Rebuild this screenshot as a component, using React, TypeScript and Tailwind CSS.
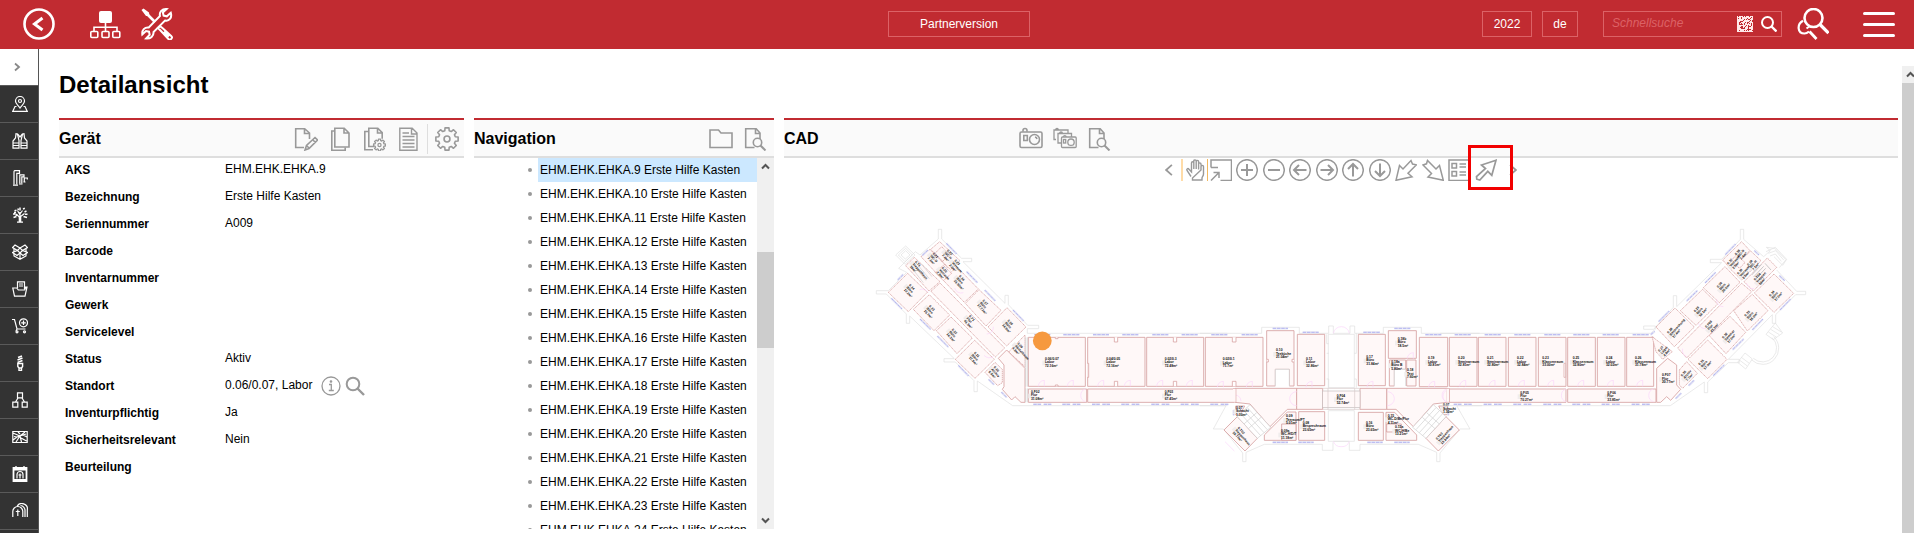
import type { ReactNode } from 'react';

type IconProps = { children: ReactNode; className?: string; box?: number; sw?: number };

function Icon({ children, className = 'size-6', box = 24, sw = 1.6 }: IconProps) {
  return (
    <svg viewBox={`0 0 ${box} ${box}`} className={className} fill="none" stroke="currentColor" strokeWidth={sw} aria-hidden="true">
      {children}
    </svg>
  );
}

/* ---------- sidebar ---------- */

const sideItems: { label: string; icon: ReactNode }[] = [
  {
    label: 'Standorte',
    icon: (
      <>
        <path d="M8 12C5 8.500 3.500 7 3.500 5a4.500 4.500 0 0 1 9 0C12.500 7 11 8.500 8 12z" />
        <circle cx="8" cy="5" r="1.500" />
        <path d="M4.500 10.500H3L.8 15.300h14.400L13 10.500h-1.500" />
      </>
    ),
  },
  {
    label: 'Arbeitsschutz',
    icon: (
      <>
        <path d="M4 .8 3.500 5 1 8v7.200h6V7.500L5.500 1zM12 .8l.5 4.200L15 8v7.200H9V7.500L10.500 1z" />
        <path d="M1 10h6M1 12.500h6M9 10h6M9 12.500h6M5.500 1 8 4l2.500-3" />
      </>
    ),
  },
  {
    label: 'Leitungen',
    icon: (
      <>
        <path d="M2 14.500V1.500A1 1 0 0 1 3 .7h4.500v2.600H4.800v11.200" />
        <path d="M7.800 13.500V4.800H12v2H9.800v6.700M12.300 12V8h3v1.600" />
        <path d="M1 15.200h5M7 14h3.500M11.500 12h2" />
      </>
    ),
  },
  {
    label: 'Grünflächen',
    icon: (
      <>
        <path d="M8 15V5M8 10.500 4 7M8 10l4.500-3.500M8 8 5.500 3.500M8 7l2.500-3.500M5 15.200h6" />
        <path d="M7.500 10v5M8.500 10v5" strokeWidth="1.600" />
        <path d="M1 7h2.500M1.500 10.500 4.500 9.500M4.500 3.200 2.500 3.800M8 .5V3.500M11 2l1.800-.8M12.500 5l2-1M11.500 9.500l3.500 1M4 5.500H2M5.800 1.500l.7 1.500M13 7.200h2.500M5.500 8l-2 .5" strokeWidth="1.500" />
      </>
    ),
  },
  {
    label: 'Lager',
    icon: (
      <>
        <path d="m8 4 5-3 2.500 2.500L10.500 6.500 8 4 5.500 6.500.5 3.500 3 1z" />
        <path d="M5.500 6.500 8 9l2.500-2.500 5 2-4.500 3L8 9l-3 2.500-4.500-3z" />
        <path d="M2 9.500V12l6 3.300 6-3.300V9.500M8 9v6M2 5v3M14 5v3" />
      </>
    ),
  },
  {
    label: 'Dokumente',
    icon: (
      <>
        <path d="M5.500 7V.8h7V8M7 3h4M7 5h4" />
        <path d="M12.500 6H15l-2 9.200H2.500L.8 7h4l1.500 2h6.200L14 6" />
      </>
    ),
  },
  {
    label: 'Bestellung',
    icon: (
      <>
        <path d="M0 1.500h2.500L5 11h8.500M4 13l1-2" />
        <circle cx="11.500" cy="4.800" r="4" />
        <path d="M11.500 2.500v4.600M9.200 4.800h4.600" />
        <circle cx="5" cy="13.800" r="1" />
        <circle cx="12.500" cy="13.800" r="1" />
      </>
    ),
  },
  {
    label: 'Energie',
    icon: (
      <>
        <path d="M6 2.500 10 1M5.500 5 10.500 3M5.500 7.500l5-2" strokeWidth="1.500" />
        <path d="M5.800 8.500h4.800v3l-1 1.500H7l-1.200-1.500zM7 13.500v2h2.500v-2" strokeWidth="1.400" />
      </>
    ),
  },
  {
    label: 'Struktur',
    icon: <path d="M5.500.8h5v5h-5zM.8 10.200h5v5h-5zM10.200 10.200h5v5h-5zM6 6l-2.500 4M10 6l2.500 4" />,
  },
  {
    label: 'Karte',
    icon: <path d="M.8 2.500h14.400v11H.8zM1 4l7 3 5-4M1 11l4-3 9-3M4 13l4-6 1.500 6M9 9l5.500 3M6 3l2 2M2 7.500l3 .5M11 6l4 2" />,
  },
  {
    label: 'Termine',
    icon: (
      <>
        <path d="M1.500 2h13v13h-13z" strokeWidth="1.800" />
        <path d="M1.500 3.500h13M4 .3V3M12 .3V3M1 14h14" strokeWidth="1.800" />
        <path d="M5 12.500V8.500a3 3 0 0 1 6 0v4M8 7.500v5M6.500 9h3" />
      </>
    ),
  },
  {
    label: 'Friedhof',
    icon: (
      <>
        <path d="M.8 14V8.500a5 5 0 0 1 10 0V14" />
        <path d="M5 3.500a5.500 5.500 0 0 1 10.300 3.500v7M8.500 2.500A5 5 0 0 1 13 8v6M5.800 6.500V13M3.800 8.500h4" />
      </>
    ),
  },
];

function Sidebar() {
  return (
    <nav aria-label="Module" className="flex w-[39px] shrink-0 flex-col overflow-hidden border-r border-[#555] bg-[#333] text-white">
      <button aria-label="Menü ausklappen" className="flex h-9 shrink-0 items-center bg-white pl-3 text-[#888]">
        <Icon box={10} className="size-2.5" sw={1.8}>
          <path d="m3 1.500 4 3.500-4 3.500" />
        </Icon>
      </button>
      {sideItems.map((it) => (
        <a key={it.label} href="#" aria-label={it.label} className="flex h-[37px] shrink-0 items-center border-t border-[#5a5a5a] pl-3">
          <Icon box={16} className="size-4" sw={1.2}>
            {it.icon}
          </Icon>
        </a>
      ))}
      <div className="flex-1 border-t border-[#5a5a5a]" />
    </nav>
  );
}

/* ---------- header ---------- */

const codeCells = Array.from({ length: 256 }, (_, i) => i).filter((i) => {
  const x = i % 16;
  const y = (i - x) / 16;
  const h = Math.abs(Math.sin(x * 12.9898 + y * 78.233) * 43758.5453) % 1;
  return x === 0 || y === 15 || h < 0.62;
});

function Header() {
  return (
    <header className="grid h-[49px] shrink-0 grid-cols-[1fr_auto_1fr] items-center bg-[#c12b31] pb-px text-xs text-white">
      <div className="flex items-center pl-[23px]">
        <button aria-label="Zurück">
          <Icon box={32} className="size-8" sw={2.6}>
            <circle cx="16" cy="16" r="14.500" />
            <path d="m19.500 10-8 6 8 6" strokeWidth="3" />
          </Icon>
        </button>
        <button aria-label="Struktur" className="ml-[34px]">
          <Icon box={32} className="size-8" sw={1.6}>
            <rect x="10" y="3" width="13" height="12" rx="2" fill="currentColor" stroke="none" />
            <path d="M16.500 15v8M5 23v-3.800h23V23" />
            <rect x="1.800" y="23.500" width="7" height="6" rx="1" />
            <rect x="13" y="23.500" width="7" height="6" rx="1" />
            <rect x="23.800" y="23.500" width="7" height="6" rx="1" />
          </Icon>
        </button>
        <button aria-label="Werkzeuge" className="ml-5">
          <Icon box={32} className="size-8" sw={2}>
            <path d="M4.500 4.500 14 14" strokeWidth="2.600" />
            <path d="M.5 2 2.500.5 8 4.500 8.500 8 5 8z" fill="currentColor" stroke="none" />
            <path d="m17 20 2-2 3 2.500 8.200 7.500a2 2 0 0 1-2.800 3L20 23zM23 23.500l5 5" />
            <path d="m29.800 4.800-4 3.500-3.200-.7-.8-3.200 3.700-3.300C21 .8 18 4 19 8L7.800 19.500C3.500 19 .8 22 1.300 26.500L5 23l3 .7.700 3-3.600 3.800C9.500 31 13 28 12.500 24L24 12.500c4 1 7.300-2.500 5.800-7.700z" />
          </Icon>
        </button>
      </div>
      <button className="ml-1 h-[26px] w-[142px] border border-[#dc6266]">Partnerversion</button>
      <div className="flex items-center justify-end pr-[19px]">
        <button className="h-[26px] w-[50px] border border-[#dc6266]">2022</button>
        <button className="ml-2.5 h-[26px] w-9 border border-[#dc6266]">de</button>
        <form className="ml-[25px] flex h-[26px] w-[179px] items-center border border-[#dc6266] pr-1">
          <input
            aria-label="Schnellsuche"
            placeholder="Schnellsuche"
            className="min-w-0 flex-1 bg-transparent pb-0.5 pl-2 italic outline-none placeholder:text-[#dc6266]"
          />
          <button type="button" aria-label="Code scannen">
            <svg viewBox="0 0 16 16" className="size-4" fill="#ffe9e9" shapeRendering="crispEdges">
              {codeCells.map((i) => (
                <rect key={i} x={i % 16} y={Math.floor(i / 16)} width="1" height="1" />
              ))}
            </svg>
          </button>
          <button aria-label="Suchen" className="ml-2">
            <Icon box={16} className="size-4" sw={2}>
              <circle cx="6.500" cy="6.500" r="5.500" />
              <path d="m10.500 10.500 5 5" strokeWidth="2.400" />
            </Icon>
          </button>
        </form>
        <button aria-label="Erweiterte Suche" className="ml-[15px]">
          <Icon box={32} className="size-8" sw={2.6}>
            <circle cx="16.500" cy="10" r="9" />
            <path d="m23 16.500 8.500 8.500" strokeWidth="3.200" />
            <path d="M6 12.800C-.5 16.500.5 25.500 7.500 25.500c2 0 3-.7 4.500-2" strokeWidth="2.200" />
            <path d="m12.500 23.500 7 7.500" strokeWidth="2.800" />
            <path d="M9.500 20.500 13 18" strokeWidth="2" />
          </Icon>
        </button>
        <button aria-label="Menü" className="ml-[34px] flex w-8 flex-col gap-2">
          <span className="h-[3px] w-full rounded-sm bg-white" />
          <span className="h-[3px] w-full rounded-sm bg-white" />
          <span className="h-[3px] w-full rounded-sm bg-white" />
        </button>
      </div>
    </header>
  );
}

/* ---------- panels ---------- */

function Gear({ cx, cy, r }: { cx: number; cy: number; r: number }) {
  const pts: string[] = [];
  for (let i = 0; i < 8; i++) {
    [[-15, 0.76], [-10, 1], [10, 1], [15, 0.76]].forEach(([o, k]) => {
      const a = ((i * 45 + o) * Math.PI) / 180;
      pts.push(`${(cx + Math.cos(a) * r * k).toFixed(2)},${(cy + Math.sin(a) * r * k).toFixed(2)}`);
    });
  }
  return (
    <>
      <polygon points={pts.join(' ')} strokeLinejoin="round" />
      <circle cx={cx} cy={cy} r={r * 0.26} />
    </>
  );
}

const docSearch = (
  <>
    <path d="M11.500 20.500H2.700V1.700h10.500L17 6v6M12.500 2v4.500H17" />
    <circle cx="14.500" cy="15.500" r="4.200" />
    <path d="m17.500 18.500 5 5" strokeWidth="2" />
  </>
);

function PanelHead({ title, children }: { title: string; children: ReactNode }) {
  return (
    <div className="flex h-10 shrink-0 items-center border-t-2 border-b-2 border-t-[#c12b31] border-b-[#dedede] bg-[#fafafa] pt-0.5">
      <h2 className="min-w-[235px] flex-none text-base font-bold">{title}</h2>
      <div className="flex flex-1 items-center text-[#999]">{children}</div>
    </div>
  );
}

function Tool({ label, children }: { label: string; children: ReactNode }) {
  return (
    <button aria-label={label} className="shrink-0">
      <Icon>{children}</Icon>
    </button>
  );
}

const fields: [string, string][] = [
  ['AKS', 'EHM.EHK.EHKA.9'],
  ['Bezeichnung', 'Erste Hilfe Kasten'],
  ['Seriennummer', 'A009'],
  ['Barcode', ''],
  ['Inventarnummer', ''],
  ['Gewerk', ''],
  ['Servicelevel', ''],
  ['Status', 'Aktiv'],
  ['Standort', '0.06/0.07, Labor'],
  ['Inventurpflichtig', 'Ja'],
  ['Sicherheitsrelevant', 'Nein'],
  ['Beurteilung', ''],
];

function DevicePanel() {
  return (
    <section className="w-[405px] shrink-0">
      <PanelHead title="Gerät">
        <div className="flex gap-2.5">
          <Tool label="Bearbeiten">
            <path d="M10 20.500H1.700V1.700h9L15.500 6v6M10.500 2v4.500h5" />
            <path d="m11 23 1.500-4.500 8.500-8 2.500 2.500-8.500 8.500zM18.500 12.500l3 3M12.500 18.500l3 3" />
          </Tool>
          <Tool label="Kopieren">
            <path d="M6.800 1.200h9.400L21 6v14H6.800zM16 1.500V6h5" />
            <path d="M6.500 4H3.800v19.200h13.400V20.500" />
          </Tool>
          <Tool label="Kopieren mit Optionen">
            <path d="M12 19.500H6.800V1.200h9L20.200 5.700v6M15.500 1.500V6h4.700" />
            <path d="M6.500 4.500H2.800v18.200H11" />
            <g strokeWidth="1.300">
              <Gear cx={17.500} cy={18} r={6} />
            </g>
          </Tool>
          <Tool label="Bericht">
            <path d="M3.800 1.200h12.400L21 6v17.200H3.800zM15.500 1.500V7H21M6.500 6H13M6.500 9.500h12M6.500 13h12M6.500 16.500h12M6.500 20h12" strokeWidth="1.400" />
          </Tool>
        </div>
        <div className="ml-auto flex h-[30px] items-center border-l border-[#dedede] pr-[5px] pl-[7px]">
          <Tool label="Einstellungen">
            <Gear cx={12} cy={12} r={11.3} />
          </Tool>
        </div>
      </PanelHead>
      <dl className="flex flex-col gap-1 pl-1.5 text-xs leading-[23px]">
        {fields.map(([k, v]) => (
          <div key={k} className="flex h-[23px]">
            <dt className="w-40 shrink-0 pt-px font-bold">{k}</dt>
            <dd className="flex items-center">
              {v}
              {k === 'Standort' && (
                <span className="ml-[9px] flex items-center gap-1 text-[#999]">
                  <button aria-label="Information">
                    <Icon box={20} className="size-5" sw={1.3}>
                      <circle cx="10" cy="10" r="9" />
                      <path d="M8 8.500h2.300v6M7.800 14.500h5" />
                      <circle cx="10" cy="5.500" r=".7" fill="currentColor" />
                    </Icon>
                  </button>
                  <button aria-label="Standort suchen">
                    <Icon box={20} className="size-5" sw={2}>
                      <circle cx="8" cy="8" r="6.300" />
                      <path d="m12.500 12.500 6.500 6.500" strokeWidth="2.400" />
                    </Icon>
                  </button>
                </span>
              )}
            </dd>
          </div>
        ))}
      </dl>
    </section>
  );
}

const devices = Array.from({ length: 16 }, (_, i) => `EHM.EHK.EHKA.${i + 9} Erste Hilfe Kasten`);

function ScrollArrow({ up = false }: { up?: boolean }) {
  return (
    <span className="flex h-[17px] shrink-0 items-center justify-center text-[#555]">
      <Icon box={9} className="size-[9px]" sw={2}>
        <path d={up ? 'M1 6.500 4.500 3 8 6.500' : 'M1 2.500 4.500 6 8 2.500'} />
      </Icon>
    </span>
  );
}

function NavigationPanel() {
  return (
    <section className="flex w-[300px] shrink-0 flex-col">
      <PanelHead title="Navigation">
        <div className="flex gap-2.5">
          <Tool label="Ordner">
            <path d="M1 3h8.500l2.500 3h11v14.500H1z" />
          </Tool>
          <Tool label="Vorschau">{docSearch}</Tool>
        </div>
      </PanelHead>
      <div className="flex min-h-0 flex-1">
        <ul className="min-w-0 flex-1 overflow-hidden pl-[54px] text-xs leading-6">
          {devices.map((d, i) => (
            <li key={d} className="flex items-center">
              <span className="mr-1.5 size-1 shrink-0 rounded-full bg-[#999]" />
              <a href="#" className={`flex-1 whitespace-nowrap pl-0.5 ${i === 0 ? 'bg-[#cce8ff]' : ''}`}>
                {d}
              </a>
            </li>
          ))}
        </ul>
        <div className="flex w-[17px] shrink-0 flex-col bg-[#f0f0f0]">
          <ScrollArrow up />
          <div className="flex flex-1 flex-col pt-[77px]">
            <div className="h-24 bg-[#cdcdcd]" />
          </div>
          <ScrollArrow />
        </div>
      </div>
    </section>
  );
}

/* ---------- floor plan ---------- */

const roomCls = { fill: '#fff8f8', stroke: '#d8a2a2', strokeWidth: 2.6 };

function Rooms({ list, dashed = false }: { list: string[]; dashed?: boolean }) {
  return (
    <g {...roomCls} strokeDasharray={dashed ? '4 2' : undefined}>
      {list.map((p) => (
        <polygon key={p} points={p} />
      ))}
    </g>
  );
}

function Windows({ list }: { list: string[] }) {
  return (
    <g fill="none">
      <path d={list.join('')} stroke="#e6e6f4" strokeWidth="7" />
      <path d={list.join('')} stroke="#9a9df2" strokeWidth="2" strokeDasharray="10 3" />
    </g>
  );
}

type LabelDef = [number, number, string, string, string];

function Labels({ list, rotate = 0 }: { list: LabelDef[]; rotate?: number }) {
  return (
    <g fill="#111" fontSize="10" fontWeight="700" fontFamily="'Liberation Sans', Arial, sans-serif">
      {list.map(([x, y, a, b, c]) => (
        <g key={`${x}-${y}`} transform={`translate(${x} ${y}) rotate(${rotate})`}>
          <rect x="-8" y="-4" width="22" height="14" fill="#f1eded" />
          <text x="0" y="-6">{a}</text>
          <text x="0" y="4">{b}</text>
          <text x="0" y="15">{c}</text>
        </g>
      ))}
    </g>
  );
}

const box = (x1: number, y1: number, x2: number, y2: number) => `${x1},${y1} ${x2},${y1} ${x2},${y2} ${x1},${y2}`;
const door = (x: number, y: number) => `M${x} ${y}v-18a18 18 0 0 0-18 18`;
const facade = (xs: number[], top: number, bottom: number) =>
  xs.flatMap((x) => [`M${x - 24} ${top}h48`, `M${x - 27} ${bottom}h24`, `M${x + 4} ${bottom}h23`]);

function LeftWing() {
  return (
    <g transform="translate(860 220) scale(.33333)">
      <g fill="none" stroke="#e0e0e0" strokeWidth="2">
        <path d="M235 57V28h10v29l60 58h30v10h-26L435 250v-24h10v28l58 62h33v10h-34v14h600M85 212H49v10h30l60 60v28h10v-22L283 416h-31v10h34l56 56v33h10v-32l106 74h644M85 212l55-55-24-12 50-50 14 10 55-48" />
        <path d="m107 105 30-27 28 27-30 28zM115 105l22-20 20 20-22 20zM123 105l14-13 13 13-14 12z" />
      </g>
      <Rooms
        dashed
        list={[
          '85,217 143,160 202,217 145,275',
          '160,268 208,224 269,285 222,332',
          '229,332 273,291 337,354 291,401',
          '286,418 344,361 403,418 345,475',
          '213,214 240,189 434,384 406,411',
          '249,180 290,140 355,207 313,247',
          '316,250 357,209 423,271 378,318',
          '384,321 441,263 498,321 440,378',
          '183,110 210,88 262,142 237,168',
          '212,88 239,65 300,122 272,150',
          '225,100 245,80 268,104 248,124',
          '226,158 250,136 275,160 250,182',
          '137,137 163,112 240,185 207,213',
          '446,396 495,345 495,440',
          '375,457 405,427 427,448 427,488 413,497',
        ]}
      />
      <Rooms
        list={[
          '415,415 440,390 495,445 495,547 483,547 465,530 455,540 427,508 432,500 432,435',
          box(505, 352, 676, 499),
          box(683, 352, 855, 499),
          box(860, 352, 1031, 499),
          box(505, 507, 680, 547),
          '683,507 1121,507 1121,547 683,547',
        ]}
      />
      <g fill="none" stroke="#cfcfcf" strokeWidth="2">
        <path d="m160 150 30 38m-22-44 30 38m-22-44 32 38m-24-44 32 38" />
        <path d="M497 352v148M502 352v148M497 505v42M502 505v42" />
      </g>
      <g fill="#fff" stroke="#d8a2a2" strokeWidth="2.400">
        <path d="M763 352v14h10v-14M763 499v-15h10v15M940 352v14h10v-14M940 499v-15h10v15M586 352v4h8v-4M586 499v-4h8v4M682 430h4v42h-4" />
      </g>
      <path
        d={[553, 640, 731, 811, 908, 997].map((x) => door(x, 499)).join('') + 'M676 507a20 20 0 0 0 0 38M205 217a22 22 0 0 0-26-8M310 218a20 20 0 0 1-26-14M400 320a20 20 0 0 1-20 22M400 410a22 22 0 0 1-28-4'}
        fill="none"
        stroke="#fbd5fb"
        strokeWidth="2"
      />
      <Windows
        list={[
          ...facade([547, 634, 723, 811, 901, 989, 1078], 344, 553),
          'M259 70l31 32', 'M320 155l32 33', 'M374 210l32 33', 'M459 270l32 33', 'M94 235l32 32', 'M180 297l32 31',
          'M232 348l33 33', 'M295 436l31 32', 'M386 478l16 16', 'M424 516l16 16', 'M187 106l17-16', 'M113 180l17-17',
        ]}
      />
      <Labels
        rotate={48}
        list={[
          [142, 200, '0.14', 'Büro', '17.2m²'], [202, 263, '0.13', 'Büro', '15.7m²'], [270, 333, '0.12', 'Büro', '16.1m²'], [337, 403, '0.11', 'Büro', '17.5m²'],
          [322, 293, '0.F1', 'Flur', '41.3m²'], [292, 173, '0.16', 'Büro', '21.90m²'], [362, 246, '0.17', 'Büro', '17.77m²'], [437, 306, '0.18', 'Büro', '16.9m²'],
          [213, 105, '0.21', 'WC-D', '7.1m²'], [256, 96, '0.22', 'WC-H', '7.4m²'], [240, 148, '0.20', 'Vorraum', '2.8m²'], [278, 126, '0.23', 'Vorraum', '2.6m²'],
          [160, 130, '0.T1', 'Treppenhaus', '19m²'], [467, 375, '0.09', 'Abstellraum', '4.8m²'], [396, 446, '0.10', 'Archiv', '8.5m²'],
        ]}
      />
      <Labels
        list={[
          [555, 426, '0.06/0.07', 'Labor', '72.16m²'], [739, 426, '0.04/0.05', 'Labor', '72.16m²'], [914, 426, '0.02/0.3', 'Labor', '72.48m²'],
          [513, 525, '0.F02', 'Flur', '31.08m²'], [914, 525, '0.F03', 'Flur', '67.45m²'],
        ]}
      />
    </g>
  );
}

function CentreBlock() {
  return (
    <g transform="translate(1200 300) scale(.33333)">
      <g fill="none" stroke="#e0e0e0" strokeWidth="2">
        <path d="M0 100h185V82h113v18h88V78h14v22h50V78h14v22h86V82h114v18h175M385 103h78v160h-78zM380 103v28h6M380 160h6M463 160h6v-60M380 237h6v26M463 237h6v26" />
        <path d="M0 317h78l-38 70v0h30l58 72v26h10v-28l55-24h174v18h32v-24M385 332h78v92h-78zM846 317h-76l40 70h-30l-60 72v26h-10v-28l-55-24H480v18h-32v-24M400 424h48" />
      </g>
      <Rooms
        list={[
          box(16, 112, 189, 259),
          '200,92 282,92 282,258 268,258 268,208 226,208 226,258 200,258',
          box(292, 103, 374, 257),
          box(475, 103, 556, 257),
          box(565, 92, 649, 175),
          '568,180 617,180 617,208 583,208 583,258 568,258',
          box(620, 180, 648, 258),
          box(658, 112, 743, 260),
          '105,265 290,265 290,328 262,328 210,380 150,312 105,307',
          '741,265 560,265 560,328 588,328 640,380 700,312 741,307',
          box(290, 265, 368, 328),
          box(480, 265, 560, 328),
          box(296, 335, 374, 421),
          box(475, 337, 550, 421),
          '193,405 262,336 288,336 288,421 193,421',
          '558,337 584,337 650,405 650,421 558,421',
          '245,372 288,372 288,421 245,421',
          box(560, 372, 604, 396),
          '72,390 112,350 172,415 135,453',
          '778,390 738,350 678,415 715,453',
          '107,318 134,318 120,344 107,344',
          '743,318 716,318 730,344 743,344',
        ]}
      />
      <rect x="368" y="273" width="112" height="49" fill="#fff8f8" stroke="#c4bcbc" strokeWidth="2" />
      <path d="M368 265h112M368 328h112M384 265v64M464 265v64" stroke="#d8c8c8" strokeWidth="2" />
      <g fill="#fff" stroke="#cfcfcf" strokeWidth="2">
        <path d="m112 350 38-36 62 68-40 33zM738 350l-38-36-62 68 40 33z" />
        <path d="m122 341 60 66M132 332l60 66M142 323l60 66M728 341l-60 66M718 332l-60 66M708 323l-60 66M132 372l38-34M718 372l-38-34M145 386l38-34M705 386l-38-34" />
        <path d="M226 258v-50h42v50M583 258v-50h34v50" />
      </g>
      <g fill="#fff" stroke="#d8a2a2" strokeWidth="2.400">
        <path d="M97 112v14h11v-14M97 259v-15h11v15M200 178h5v8h-5M282 178h-6v8h6" />
      </g>
      <path
        d={[70, 157, 336, 519, 704, 792, 640].map((x, i) => door(x, i === 6 ? 176 : 262)).join('') + 'M400 100a24 24 0 0 1 24-20 24 24 0 0 1 24 20M105 285a20 20 0 0 1 18 18M290 275a20 20 0 0 0 0 42M562 275a20 20 0 0 1 0 42M740 270a22 22 0 0 0 0 38M75 425l28 28M400 424a24 24 0 0 0 24 16 24 24 0 0 0 24-16'}
        fill="none"
        stroke="#fbd5fb"
        strokeWidth="2"
      />
      <Windows
        list={[
          'M125 104h48', 'M218 85h46', 'M308 97h48', 'M490 97h50', 'M583 85h48', 'M676 104h48',
          'M218 427h46', 'M295 427h46', 'M502 427h46', 'M583 427h46', 'M101 330v16', 'M745 330v16',
        ]}
      />
      <Labels
        list={[
          [68, 187, '0.02/0.1', 'Labor', '71.7m²'], [228, 160, '0.10', 'Teeküche', '21.04m²'], [318, 186, '0.11', 'Labor', '32.86m²'], [499, 180, '0.17', 'Büro', '31.84m²'],
          [593, 126, '0.18b', 'Büro', '18.5m²'], [574, 194, '0.18a', 'Büro B', '5.80m²'], [621, 220, '0.18', 'Text', '7.60m²'], [684, 184, '0.19', 'Labor', '30.81m²'],
          [410, 296, '0.F04', 'Flur', '52.74m²'], [258, 358, '0.09', 'Teeraum/PT', '5.01m²'], [308, 377, '0.08', 'Besprechraum', '23.65m²'],
          [243, 402, '0.09a', 'WC-H/D/T', '11.18m²'], [498, 377, '0.16', 'Büro', '23.65m²'], [563, 356, '0.15', 'WC-D/Be/Flur', '4.11m²'], [585, 391, '0.15a', 'WC-H/Be', '13.21m²'],
          [108, 332, '0.07', 'Schacht', '1.30m²'], [729, 325, '0.07', 'Schacht', '1.30m²'],
        ]}
      />
      <Labels rotate={48} list={[[108, 388, '0.T02', 'Treppenhaus', '19.77m²']]} />
      <Labels rotate={-48} list={[[716, 424, '0.T03', 'Treppenhaus', '19.84m²']]} />
    </g>
  );
}

function RightWing() {
  return (
    <g transform="translate(1440 220) scale(.33333)">
      <g fill="none" stroke="#e0e0e0" strokeWidth="2">
        <path d="M0 340h632l14-12v-10h-35v10h30L700 262v-35h10v33L845 128h-34v-10h34l56-60V28h10v30l60 52 20-18-12-10 25 3 34 34-20 24M1010 150l60 64h27v10h-30l-60 60v26h-10v-26L865 418h33v10h-33l-62 58v32h-10v-32l-102 71H0" />
        <path d="m978 95 28-13 34 36-12 18-26-26M985 100l22-8 24 28M990 108l16-6 18 22" />
        <path d="M1001 350a45 45 0 1 1-66 70M996 353a40 40 0 1 1-56 62" />
        <path d="m978 343 28-34 22 30-28 20zM985 336l25 16M992 328l26 16M998 320l26 16M893 427l22-28 22 18-20 30zM898 420l24 18M904 412l24 18" />
      </g>
      <Rooms
        list={[
          ...[28, 115, 205, 295, 383, 472].map((x) => box(x, 352, x + 83, 499)),
          box(560, 352, 641, 499),
          box(28, 507, 378, 547),
          box(383, 507, 648, 547),
          '683,415 710,435 710,495 722,508 692,541 680,530 662,547 650,547 650,445',
        ]}
      />
      <Rooms
        dashed
        list={[
          '943,219 1002,162 1061,220 1002,277',
          '881,272 937,223 984,272 922,333',
          '808,347 870,289 917,337 858,401',
          '744,418 803,360 861,418 803,476',
          '713,384 905,190 935,215 740,414',
          '648,321 705,264 763,321 703,380',
          '721,272 788,208 833,252 768,316',
          '790,203 855,140 900,187 838,248',
          '848,120 905,65 930,92 872,146',
          '872,148 932,93 963,122 905,180',
          '890,104 915,128 898,145 875,120',
          '912,185 982,114 1010,142 940,213',
          '636,350 697,395 668,418 648,395',
          '718,450 740,425 772,460 728,505 718,495',
        ]}
      />
      <path d="m935 165 30-32m-24 38 30-32m-24 38 30-32M975 130l18 20" fill="none" stroke="#c8c8c8" strokeWidth="3" />
      <path d="M372 430h5v42h-5z" fill="#fff" stroke="#d8a2a2" strokeWidth="2" />
      <path
        d={[77, 165, 253, 341, 431, 520, 608].map((x) => door(x, 499)).join('') + 'M378 507a20 20 0 0 0 0 38M640 507a20 20 0 0 0 0 38M20 507a20 20 0 0 0 0 38M850 260a20 20 0 0 1-20-22M920 190a20 20 0 0 0 22 16M776 310a20 20 0 0 0 22 16M740 410a20 20 0 0 1-12-24'}
        fill="none"
        stroke="#fbd5fb"
        strokeWidth="2"
      />
      <Windows
        list={[
          ...facade([68, 158, 247, 337, 424, 512, 602], 344, 553),
          'M856 104l31-32', 'M795 189l32-32', 'M740 243l32-31', 'M656 305l32-32', 'M1020 270l32-33', 'M937 330l32-33', 'M878 389l33-32',
          'M820 467l33-32', 'M746 497l16-16', 'M707 536l17-17', 'M943 92l14 13', 'M1018 167l16 15', 'M632 344l12-10',
        ]}
      />
      <Labels
        list={[
          [54, 424, '0.20', 'Seminarraum', '32.81m²'], [141, 424, '0.21', 'Seminarraum', '32.80m²'], [231, 424, '0.22', 'Labor', '32.84m²'], [307, 424, '0.23', 'Klassenraum', '33.00m²'],
          [398, 424, '0.25', 'Klassenraum', '32.80m²'], [498, 424, '0.24', 'Labor', '32.02m²'], [585, 424, '0.26', 'Klassenraum', '31.78m²'],
          [241, 527, '0.F05', 'Flur', '70.27m²'], [502, 527, '0.F06', 'Flur', '33.85m²'], [666, 475, '0.F07', 'Flur', '20.77m²'],
        ]}
      />
      <Labels
        rotate={-48}
        list={[
          [996, 234, '0.34', 'Büro', '17.0m²'], [922, 294, '0.33', 'Büro', '16.0m²'], [855, 360, '0.32', 'Seminar', '17.0m²'], [784, 440, '0.31', 'Büro', '17.9m²'],
          [804, 328, '0.F08', 'Flur', '43.3m²'], [690, 345, '0.28', 'Besprechung', '17.4m²'], [770, 281, '0.29', 'Büro', '18.1m²'], [839, 208, '0.30', 'Büro', '20.0m²'],
          [893, 110, '0.36', 'WC-D', '7.4m²'], [870, 138, '0.37', 'Vorraum', '2.5m²'], [930, 142, '0.38', 'WC-H', '7.1m²'], [900, 168, '0.39', 'Vorraum', '2.5m²'],
          [950, 186, '0.T04', 'Treppen', '18m²'], [663, 400, '0.27', 'Lager', '4.8m²'], [731, 474, '0.35', 'Archiv', '7.7m²'],
        ]}
      />
    </g>
  );
}

function FloorPlan() {
  return (
    <svg viewBox="871 220 940 250" className="mt-[39px] w-[940px] max-w-full" role="img" aria-label="Grundriss Erdgeschoss">
      <CentreBlock />
      <LeftWing />
      <RightWing />
      <path d="M1233 388.500h3v13.800h-3M1446.500 388.500h3v13.800h-3" fill="#fff8f8" stroke="#d8a2a2" strokeWidth=".6" />
      <circle cx="1042.300" cy="340.800" r="9.400" fill="#f6993f" />
    </svg>
  );
}

const arrow = (d: string) => (
  <>
    <circle cx="11" cy="11" r="10.300" />
    <path d={d} strokeWidth="2" />
  </>
);

const cadTools: { label: string; icon: ReactNode }[] = [
  { label: 'Bereich zoomen', icon: <path d="M1 8.500V1h20.500v20.500H10.500M1 8.500h7M1 21.500 8.500 14M3.500 13.500h5.500V19" /> },
  { label: 'Vergrößern', icon: arrow('M11 5v12M5 11h12') },
  { label: 'Verkleinern', icon: arrow('M5 11h12') },
  { label: 'Nach links', icon: arrow('M17.500 11H5M10 6l-5 5 5 5') },
  { label: 'Nach rechts', icon: arrow('M4.500 11H17M12 6l5 5-5 5') },
  { label: 'Nach oben', icon: arrow('M11 17.500V5M6 10l5-5 5 5') },
  { label: 'Nach unten', icon: arrow('M11 4.500V17M6 12l5 5 5-5') },
  { label: 'Pfeil links unten', icon: <path d="M1 21.300 4.500 6.500 8 10l8-8.500 1.500 3.500 4 .8-8.500 8.500 4 3.500z" /> },
  { label: 'Pfeil rechts unten', icon: <path d="M21.300 21.300 17.500 6.500 14 10 5.500 1.500 4.500 4.800 1 6l8.500 8.500L6 18z" /> },
  {
    label: 'Legende',
    icon: (
      <>
        <path d="M1 1h20v20.500H1z" />
        <path d="M4 4.500h4.500v4.500H4zM4 12.500h4.500V17H4zM11.500 5H18M11.500 8H18M11.500 13H18M11.500 16H18" />
      </>
    ),
  },
];

const pointer = <path d="M21 1.200 6.500 6l4 3.500-9 8 .3 2.700 3 .8 8-8.700 4 4z" />;

function CadPanel() {
  return (
    <section className="min-w-0 flex-1">
      <PanelHead title="CAD">
        <div className="flex gap-2.5">
          <Tool label="Foto">
            <rect x="1" y="5" width="22" height="15.500" rx="1.500" />
            <path d="M4 4.800V3.500a2 2 0 0 1 4 0v1.300M4.800 8.500h3.500v5H4.800z" />
            <circle cx="15.500" cy="12.500" r="5" />
            <path d="M16 10a2.500 2.500 0 0 1 2 2" />
          </Tool>
          <Tool label="Fotos">
            <g strokeWidth="1.300">
              <rect x="8.500" y="10" width="14.700" height="10.500" rx="1" />
              <rect x="10.500" y="12.500" width="2.200" height="3.500" />
              <circle cx="18" cy="15.200" r="3.200" />
              <path d="M8 16H5V6.500h13.500V10M3 12.500H1V3h14v3.500M2.500 3a1.500 1.500 0 0 1 3 0M6.500 6.500a1.500 1.500 0 0 1 3 0M10.500 10a1.300 1.300 0 0 1 2.600 0" />
            </g>
          </Tool>
          <Tool label="Vorschau">{docSearch}</Tool>
        </div>
      </PanelHead>
      <div className="flex justify-center pt-px text-[#999]">
        <button aria-label="Zurückblättern" className="mr-2">
          <Icon box={22} className="h-[22px] w-2" sw={2.2}>
            <path d="m19-3-16 14 16 14" strokeWidth="5" />
          </Icon>
        </button>
        <div className="flex w-[316px] justify-between">
          <button aria-label="Verschieben" className="-mr-[3px] border-r border-l-2 border-r-[#f2b95f] border-l-[#ffdca8] pl-0.5">
            <Icon box={22} className="size-[22px]" sw={1.4}>
              <path d="M6 17.500 2 11.500c-.8-1.600 1-2.600 2-1.200L6.500 13V4c0-1.600 2.300-1.600 2.300 0v6-8c0-1.500 2.400-1.500 2.400 0v8-7.500c0-1.500 2.400-1.500 2.400 0V10.500 5c0-1.500 2.400-1.500 2.400 0v1.500M16 11V7.500c0-1.500 2.500-1.500 2.500 0V15c0 2-1.500 3-1.500 4v2H7.500v-2z" />
            </Icon>
          </button>
          {cadTools.map((t) => (
            <button key={t.label} aria-label={t.label}>
              <Icon box={22} className="size-[22px]" sw={1.5}>
                {t.icon}
              </Icon>
            </button>
          ))}
          <button aria-label="Zeiger" className="relative">
            <Icon box={22} className="size-[22px]" sw={1.7}>
              {pointer}
            </Icon>
            <span className="absolute -top-3.5 -left-[7px] z-10 size-[45px] border-3 border-[#f20000]" />
          </button>
        </div>
        <button aria-label="Weiterblättern" className="ml-3">
          <Icon box={22} className="h-[22px] w-2" sw={2.2}>
            <path d="M3-3 19 11 3 25" strokeWidth="5" />
          </Icon>
        </button>
      </div>
      <div className="flex justify-center">
        <FloorPlan />
      </div>
    </section>
  );
}

export default function App() {
  return (
    <div className="flex h-screen flex-col overflow-hidden bg-white font-['Liberation_Sans',Arial,sans-serif] text-black">
      <Header />
      <div className="flex min-h-0 flex-1">
        <Sidebar />
        <main className="flex min-w-0 flex-1 flex-col pt-5 pr-1 pb-1 pl-5">
          <h1 className="mb-[17px] text-2xl leading-8 font-bold">Detailansicht</h1>
          <div className="flex min-h-0 flex-1 gap-2.5">
            <DevicePanel />
            <NavigationPanel />
            <CadPanel />
          </div>
        </main>
        <div className="mt-[17px] flex w-3 shrink-0 flex-col overflow-hidden bg-[#cdcdcd]">
          <div className="w-[17px] bg-[#f0f0f0]">
            <ScrollArrow up />
          </div>
        </div>
      </div>
    </div>
  );
}
